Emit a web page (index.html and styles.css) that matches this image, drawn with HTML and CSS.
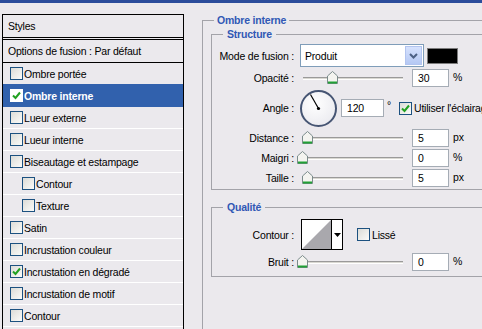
FILE: index.html
```html
<!DOCTYPE html>
<html>
<head>
    <title>Style de calque</title>
    <link rel="stylesheet" href="styles.css">
</head>
<body>
    <div class="topbar"></div>
    <div class="dialog">
        <div class="styles-panel">
            <div class="panel-head">Styles</div>
            <div class="panel-opts">Options de fusion : Par défaut</div>
            <ul class="fx-list">
                <li class="fx"><span class="cb"></span>Ombre portée</li>
                <li class="fx selected"><span class="cb checked"><svg viewBox="0 0 11 11"><path d="M2 5.5 L4.5 8 L9 2.5"/></svg></span>Ombre interne</li>
                <li class="fx"><span class="cb"></span>Lueur externe</li>
                <li class="fx"><span class="cb"></span>Lueur interne</li>
                <li class="fx"><span class="cb"></span>Biseautage et estampage</li>
                <li class="fx sub"><span class="cb"></span>Contour</li>
                <li class="fx sub"><span class="cb"></span>Texture</li>
                <li class="fx"><span class="cb"></span>Satin</li>
                <li class="fx"><span class="cb"></span>Incrustation couleur</li>
                <li class="fx"><span class="cb checked"><svg viewBox="0 0 11 11"><path d="M2 5.5 L4.5 8 L9 2.5"/></svg></span>Incrustation en dégradé</li>
                <li class="fx"><span class="cb"></span>Incrustation de motif</li>
                <li class="fx"><span class="cb"></span>Contour</li>
                <li class="fx"><span class="cb"></span></li>
            </ul>
        </div>

        <div class="settings">
            <fieldset class="group outer">
                <legend>Ombre interne</legend>

                <fieldset class="group inner">
                    <legend>Structure</legend>
                    <div class="row row-mode">
                        <label class="lbl">Mode de fusion :</label>
                        <div class="select">
                            <span class="select-text">Produit</span>
                            <span class="drop"><svg viewBox="0 0 15 17"><path d="M4 7 L7.5 10.5 L11 7"/></svg></span>
                        </div>
                        <span class="swatch"></span>
                    </div>
                    <div class="row">
                        <label class="lbl">Opacité :</label>
                        <div class="slider"><span class="track"></span><span class="thumb" style="left: 27px"><svg viewBox="0 0 11 13"><path class="thumb-body" d="M0.5 5 L5.5 0.5 L10.5 5 V12.5 H0.5 Z"/><path class="thumb-base" d="M1 11.5 H10"/></svg></span></div>
                        <span class="num">30</span>
                        <span class="unit">%</span>
                    </div>
                    <div class="row row-angle">
                        <label class="lbl">Angle :</label>
                        <div class="dial"><svg viewBox="0 0 33 33"><line x1="16.5" y1="16.5" x2="8.5" y2="2.5"/><circle cx="16.5" cy="16.5" r="1.6"/></svg></div>
                        <span class="num angle">120</span>
                        <span class="unit deg">°</span>
                        <span class="cb checked light"><svg viewBox="0 0 11 11"><path d="M2 5.5 L4.5 8 L9 2.5"/></svg></span>
                        <span class="cb-label">Utiliser l'éclairage global</span>
                    </div>
                    <div class="row">
                        <label class="lbl">Distance :</label>
                        <div class="slider"><span class="track"></span><span class="thumb" style="left: 2px"><svg viewBox="0 0 11 13"><path class="thumb-body" d="M0.5 5 L5.5 0.5 L10.5 5 V12.5 H0.5 Z"/><path class="thumb-base" d="M1 11.5 H10"/></svg></span></div>
                        <span class="num">5</span>
                        <span class="unit">px</span>
                    </div>
                    <div class="row">
                        <label class="lbl">Maigri :</label>
                        <div class="slider"><span class="track"></span><span class="thumb" style="left: -3px"><svg viewBox="0 0 11 13"><path class="thumb-body" d="M0.5 5 L5.5 0.5 L10.5 5 V12.5 H0.5 Z"/><path class="thumb-base" d="M1 11.5 H10"/></svg></span></div>
                        <span class="num">0</span>
                        <span class="unit">%</span>
                    </div>
                    <div class="row">
                        <label class="lbl">Taille :</label>
                        <div class="slider"><span class="track"></span><span class="thumb" style="left: 2px"><svg viewBox="0 0 11 13"><path class="thumb-body" d="M0.5 5 L5.5 0.5 L10.5 5 V12.5 H0.5 Z"/><path class="thumb-base" d="M1 11.5 H10"/></svg></span></div>
                        <span class="num">5</span>
                        <span class="unit">px</span>
                    </div>
                </fieldset>

                <fieldset class="group inner quality">
                    <legend>Qualité</legend>
                    <div class="row row-curve">
                        <label class="lbl">Contour :</label>
                        <div class="curve">
                            <svg class="curve-preview" viewBox="0 0 29 29"><rect width="29" height="29" fill="#fff"/><path d="M0 29 L29 0 V29 Z" fill="#a9a8ad"/></svg>
                            <span class="curve-drop"><svg viewBox="0 0 7 4"><path d="M0 0 H7 L3.5 4 Z"/></svg></span>
                        </div>
                        <span class="cb lisse"></span>
                        <span class="cb-label">Lissé</span>
                    </div>
                    <div class="row row-noise">
                        <label class="lbl">Bruit :</label>
                        <div class="slider"><span class="track"></span><span class="thumb" style="left: -3px"><svg viewBox="0 0 11 13"><path class="thumb-body" d="M0.5 5 L5.5 0.5 L10.5 5 V12.5 H0.5 Z"/><path class="thumb-base" d="M1 11.5 H10"/></svg></span></div>
                        <span class="num">0</span>
                        <span class="unit">%</span>
                    </div>
                </fieldset>
            </fieldset>
        </div>
    </div>
</body>
</html>
```

FILE: styles.css
```css
* {
    box-sizing: border-box;
}

html, body {
    margin: 0;
}

body {
    width: 482px;
    height: 329px;
    overflow: hidden;
    background-color: #ebe9ed;
    font-family: "Liberation Sans", Arial, sans-serif;
    font-size: 10.5px;
    letter-spacing: -0.2px;
    color: #000;
}

.topbar {
    height: 3px;
    background-color: #2b4c9b;
}

.dialog {
    display: flex;
    align-items: flex-start;
    padding: 11px 0 0 2px;
}

/* left list of effects */

.styles-panel {
    flex: none;
    width: 182px;
    border: 1px solid #000;
    border-bottom: none;
}

.panel-head {
    height: 25px;
    line-height: 22px;
    padding-left: 5px;
    border-bottom: 3px double #000;
}

.panel-opts {
    height: 23px;
    line-height: 22px;
    padding-left: 5px;
    border-bottom: 1px solid #000;
}

.fx-list {
    list-style: none;
    margin: 0;
    padding: 0;
}

.fx {
    display: flex;
    align-items: center;
    gap: 1px;
    height: 22px;
    padding-left: 7px;
    border-bottom: 1px solid #fff;
    white-space: nowrap;
}

.fx.sub {
    padding-left: 19px;
}

.fx.selected {
    background-color: #3161ad;
    border-bottom-color: #3161ad;
    box-shadow: 0 -1px 0 #3161ad;
    color: #fff;
    font-weight: bold;
}

.fx.selected .cb {
    border-color: #fff;
    background: #fff;
}

/* checkboxes */

.cb {
    flex: none;
    display: inline-flex;
    align-items: center;
    justify-content: center;
    width: 13px;
    height: 13px;
    border: 1px solid #1c5180;
    background: linear-gradient(135deg, #dcdcd7, #fbfbf9);
}

.cb svg {
    width: 11px;
    height: 11px;
}

.cb path {
    fill: none;
    stroke: #21a121;
    stroke-width: 2;
}

.cb-label {
    flex: none;
    margin-left: 2px;
    white-space: nowrap;
}

/* right side settings */

.settings {
    flex: none;
    margin-left: 18px;
}

.group {
    margin: 0;
    min-width: 0;
    border: 1px solid #a3a3a9;
}

.group legend {
    padding: 0 4px;
    line-height: 13px;
    font-size: 10.5px;
    font-weight: bold;
    color: #3058b5;
}

.outer {
    width: 300px;
    min-height: 400px;
    padding: 0 0 0 8px;
}

.outer > legend {
    margin-left: 3px;
    padding: 0 3px;
}

.inner {
    margin-top: 1px;
    padding: 3px 0 1px 0;
}

.inner > legend {
    margin-left: 11px;
}

.quality {
    margin-top: 11px;
    padding: 5px 0 4px 0;
}

.row {
    display: flex;
    align-items: center;
    height: 20px;
    white-space: nowrap;
}

.row > * {
    flex: none;
}

.row-mode {
    height: 23px;
    margin-bottom: 1px;
}

.row-angle {
    height: 40px;
}

.row-curve {
    height: 31px;
}

.row-noise {
    margin-top: 2px;
}

.lbl {
    width: 85px;
    padding-right: 3px;
    text-align: right;
}

.select {
    display: flex;
    align-items: center;
    width: 124px;
    height: 23px;
    margin-left: 3px;
    border: 1px solid #7f9db9;
    background-color: #fff;
}

.select-text {
    padding-left: 4px;
}

.drop {
    display: flex;
    margin-left: auto;
    margin-right: 1px;
    width: 17px;
    height: 19px;
    border: 1px solid #b2c4ef;
    background: linear-gradient(#d6e2fd, #b5c8f4);
}

.drop svg {
    width: 15px;
    height: 17px;
}

.drop path {
    fill: none;
    stroke: #4d6185;
    stroke-width: 2;
}

.swatch {
    width: 31px;
    height: 16px;
    margin-left: 3px;
    border: 1px solid #7c7c7c;
    background-color: #000;
}

.slider {
    position: relative;
    width: 105px;
    height: 20px;
    margin-left: 3px;
}

.track {
    position: absolute;
    left: 3px;
    right: 2px;
    top: 9px;
    height: 3px;
    border-top: 1px solid #9a9a9a;
    border-bottom: 1px solid #fff;
    background-color: #d9d8d2;
}

.thumb {
    position: absolute;
    top: 3px;
    width: 11px;
    height: 13px;
}

.thumb svg {
    display: block;
    width: 11px;
    height: 13px;
}

.thumb-body {
    fill: #f4f4f0;
    stroke: #7b8b8b;
    stroke-width: 1;
}

.thumb-base {
    stroke: #21a035;
    stroke-width: 2;
}

.num {
    width: 37px;
    height: 18px;
    margin-left: 7px;
    padding-left: 5px;
    line-height: 16px;
    border: 1px solid #a5acb5;
    background-color: #fff;
}

.num.angle {
    width: 43px;
    margin-left: 4px;
}

.unit {
    margin-left: 4px;
    margin-bottom: 3px;
}

.unit.deg {
    margin-left: 3px;
    margin-bottom: 6px;
}

.row-angle .cb {
    margin-left: 8px;
}

.dial {
    width: 37px;
    height: 37px;
    margin-left: 3px;
    border: 2px solid #465573;
    border-radius: 50%;
    background: radial-gradient(circle at 40% 35%, #fff, #e6e6ec);
}

.dial svg {
    display: block;
    width: 33px;
    height: 33px;
}

.dial line {
    stroke: #000;
    stroke-width: 1.2;
}

.curve {
    display: flex;
    width: 42px;
    height: 31px;
    margin-left: 4px;
    border: 1px solid #000;
    background-color: #fff;
}

.curve-preview {
    display: block;
    width: 29px;
    height: 29px;
}

.curve-drop {
    display: flex;
    align-items: center;
    justify-content: center;
    flex: 1;
    border-left: 1px solid #000;
}

.curve-drop svg {
    width: 7px;
    height: 4px;
}

.cb.lisse {
    margin-left: 14px;
}
```
